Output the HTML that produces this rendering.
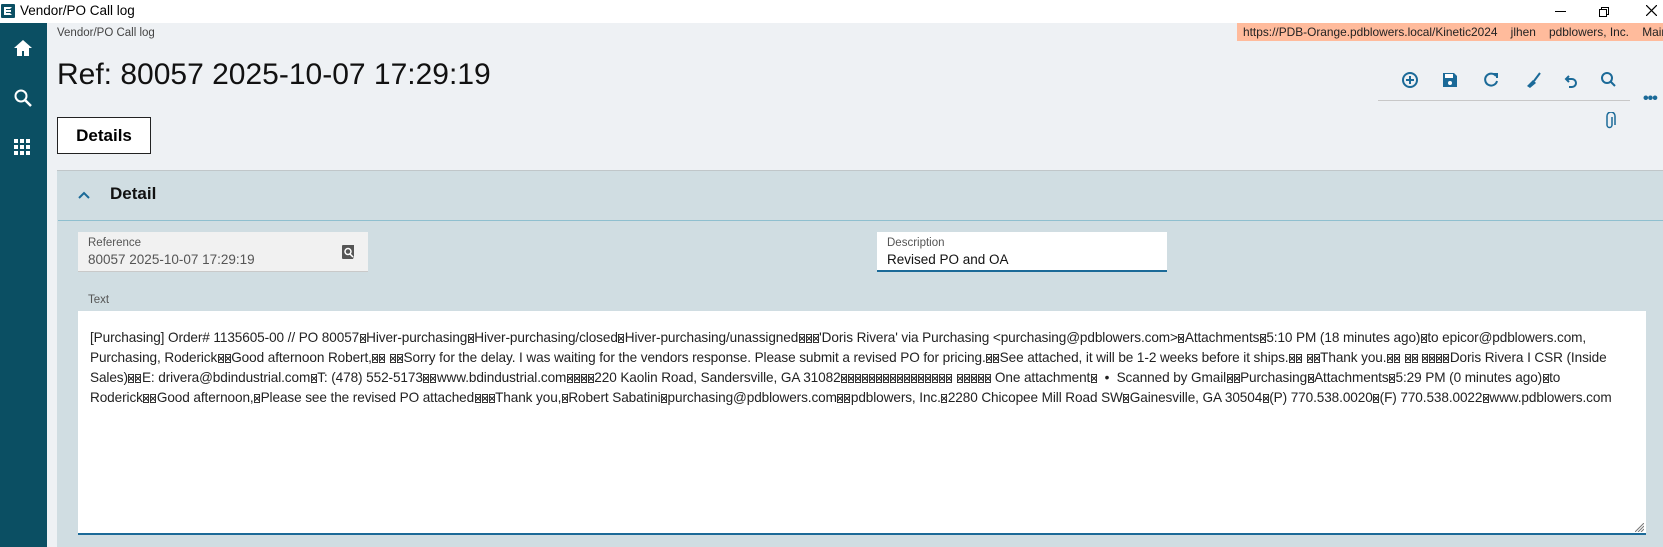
<!DOCTYPE html>
<html><head><meta charset="utf-8"><style>
*{margin:0;padding:0;box-sizing:border-box}
body{width:1663px;height:547px;overflow:hidden;background:#eef1f4;font-family:"Liberation Sans",sans-serif;position:relative;color:#000}
.abs{position:absolute}
.tb{left:0;top:0;width:1663px;height:23px;background:#fff}
.side{left:0;top:23px;width:47px;height:524px;background:#0b4f63}
.bx{display:inline-block;width:6px;height:9px;border:1px solid #333;margin:0 0.5px;vertical-align:-1px;background:linear-gradient(45deg,transparent 45%,#333 45%,#333 55%,transparent 55%),linear-gradient(-45deg,transparent 45%,#333 45%,#333 55%,transparent 55%)}
.ln{position:absolute;left:90px;white-space:nowrap;font-size:13.6px;letter-spacing:-0.1px;color:#222;line-height:20px}
</style></head><body>
<div class="abs tb"></div>
<div class="abs" style="left:1px;top:4px;width:14px;height:14px;background:#0b4f63;border-radius:1px"></div>
<div class="abs" style="left:4px;top:7px;width:8px;height:8px;border:2px solid #fff;border-right-color:transparent;"></div>
<div class="abs" style="left:5px;top:10px;width:6px;height:2px;background:#fff"></div>
<div class="abs" style="left:20px;top:3px;font-size:13.5px">Vendor/PO Call log</div>
<div class="abs" style="left:1555px;top:11px;width:11px;height:1px;background:#000"></div>
<div class="abs" style="left:1601px;top:7px;width:8px;height:8px;border:1px solid #000"></div>
<div class="abs" style="left:1599px;top:9px;width:8px;height:8px;border:1px solid #000;background:#fff"></div>
<svg class="abs" style="left:1646px;top:5px" width="11" height="11"><path d="M0 0L11 11M11 0L0 11" stroke="#000" stroke-width="1.2"/></svg>

<div class="abs side"></div>
<svg class="abs" style="left:13px;top:39px" width="20" height="18"><path d="M10 1L1 9h3v8h5v-5h2v5h5V9h3z" fill="#fff"/></svg>
<svg class="abs" style="left:13px;top:88px" width="20" height="20"><circle cx="8" cy="8" r="5.5" fill="none" stroke="#fff" stroke-width="2"/><path d="M12 12l6 6" stroke="#fff" stroke-width="2.5"/></svg>
<svg class="abs" style="left:14px;top:139px" width="18" height="18" fill="#fff"><rect x="0" y="0" width="4" height="4"/><rect x="6" y="0" width="4" height="4"/><rect x="12" y="0" width="4" height="4"/><rect x="0" y="6" width="4" height="4"/><rect x="6" y="6" width="4" height="4"/><rect x="12" y="6" width="4" height="4"/><rect x="0" y="12" width="4" height="4"/><rect x="6" y="12" width="4" height="4"/><rect x="12" y="12" width="4" height="4"/></svg>

<div class="abs" style="left:57px;top:27px;font-size:11.5px;color:#444">Vendor/PO Call log</div>
<div class="abs" style="left:1237px;top:23px;width:426px;height:18px;background:#ffbb9c;font-size:11.9px;color:#222;line-height:18px;padding-left:6px;white-space:nowrap;overflow:hidden">https://PDB-Orange.pdblowers.local/Kinetic2024 &nbsp;&nbsp; jlhen &nbsp;&nbsp; pdblowers, Inc. &nbsp;&nbsp; Main Plant</div>
<div class="abs" style="left:57px;top:58px;font-size:30px;color:#111;white-space:nowrap">Ref: 80057 2025-10-07 17:29:19</div>

<svg class="abs" style="left:1400px;top:70px" width="230" height="22" fill="none" stroke="#1b6a98" stroke-width="2">
<circle cx="10" cy="10" r="7"/><path d="M10 6v8M6 10h8"/>
<path d="M43 3h11l3 3v11H43z" fill="#1b6a98" stroke="none"/><rect x="45" y="4" width="8" height="4" fill="#fff" stroke="none"/><circle cx="50" cy="13" r="2" fill="#fff" stroke="none"/>
<path d="M96 6a6 6 0 1 0 1 5"/><path d="M93 4h4v4" />
<path d="M127 16l6-6 3 3-6 5z" fill="#1b6a98" stroke="none"/><path d="M134 11l6-8"/>
<path d="M169 6l-3 3 3 3M166 9h6a4 4 0 0 1 0 8h-3"/>
<circle cx="207" cy="8" r="5"/><path d="M211 12l4 4"/>
</svg>
<div class="abs" style="left:1378px;top:100px;width:252px;height:1px;background:#c8c8c8"></div>
<div class="abs" style="left:1643px;top:90px;font-size:16px;color:#1b6a98;font-weight:bold;letter-spacing:-1px">•••</div>
<svg class="abs" style="left:1604px;top:112px" width="12" height="18" fill="none" stroke="#1b6a98" stroke-width="1.5"><path d="M8 5v8a2.5 2.5 0 0 1-5 0V4a4 4 0 0 1 8 0v9"/></svg>

<div class="abs" style="left:57px;top:117px;width:94px;height:37px;border:1px solid #222;background:#fff;font-size:17px;font-weight:bold;text-align:center;line-height:35px">Details</div>

<div class="abs" style="left:57px;top:170px;width:1606px;height:377px;background:#d0dde2;border-top:1px solid #c0c6c9"></div>
<svg class="abs" style="left:77px;top:190px" width="14" height="10"><path d="M2 8l5-5 5 5" fill="none" stroke="#1b6a98" stroke-width="2"/></svg>
<div class="abs" style="left:110px;top:184px;font-size:17px;font-weight:bold;color:#111">Detail</div>
<div class="abs" style="left:58px;top:220px;width:1605px;height:1px;background:#8fbfcf"></div>

<div class="abs" style="left:78px;top:232px;width:290px;height:40px;background:#f1f1f1;border-bottom:1px solid #c9c9c9"></div>
<div class="abs" style="left:88px;top:237px;font-size:11.5px;color:#555">Reference</div>
<div class="abs" style="left:88px;top:252px;font-size:13.5px;color:#555">80057 2025-10-07 17:29:19</div>
<svg class="abs" style="left:342px;top:245px" width="13" height="14"><path d="M0 1a1 1 0 0 1 1-1h11v11l-1 3H1a1 1 0 0 1-1-1z" fill="#555"/><circle cx="6" cy="6.5" r="3" fill="none" stroke="#fff" stroke-width="1.5"/><path d="M8 9l3 3" stroke="#fff" stroke-width="1.5"/></svg>

<div class="abs" style="left:877px;top:232px;width:290px;height:40px;background:#fff;border-bottom:2px solid #1b6a98"></div>
<div class="abs" style="left:887px;top:237px;font-size:11.5px;color:#555">Description</div>
<div class="abs" style="left:887px;top:252px;font-size:13.5px;color:#111">Revised PO and OA</div>

<div class="abs" style="left:88px;top:294px;font-size:11.5px;color:#555">Text</div>
<div class="abs" style="left:78px;top:311px;width:1568px;height:224px;background:#fff;border-bottom:2px solid #1b6a98"></div>
<svg class="abs" style="left:1635px;top:523px" width="9" height="9" stroke="#777"><path d="M0 9L9 0M3 9L9 3M6 9L9 6"/></svg>

<div class="ln" style="top:328px">[Purchasing] Order# 1135605-00 // PO 80057<i class="bx"></i>Hiver-purchasing<i class="bx"></i>Hiver-purchasing/closed<i class="bx"></i>Hiver-purchasing/unassigned<i class="bx"></i><i class="bx"></i><i class="bx"></i>'Doris Rivera' via Purchasing &lt;purchasing@pdblowers.com&gt;<i class="bx"></i>Attachments<i class="bx"></i>5:10 PM (18 minutes ago)<i class="bx"></i>to epicor@pdblowers.com,</div>
<div class="ln" style="top:348px">Purchasing, Roderick<i class="bx"></i><i class="bx"></i>Good afternoon Robert,<i class="bx"></i><i class="bx"></i> <i class="bx"></i><i class="bx"></i>Sorry for the delay. I was waiting for the vendors response. Please submit a revised PO for pricing.<i class="bx"></i><i class="bx"></i>See attached, it will be 1-2 weeks before it ships.<i class="bx"></i><i class="bx"></i> <i class="bx"></i><i class="bx"></i>Thank you.<i class="bx"></i><i class="bx"></i> <i class="bx"></i><i class="bx"></i> <i class="bx"></i><i class="bx"></i><i class="bx"></i><i class="bx"></i>Doris Rivera I CSR (Inside</div>
<div class="ln" style="top:368px">Sales)<i class="bx"></i><i class="bx"></i>E: drivera@bdindustrial.com<i class="bx"></i>T: (478) 552-5173<i class="bx"></i><i class="bx"></i>www.bdindustrial.com<i class="bx"></i><i class="bx"></i><i class="bx"></i><i class="bx"></i>220 Kaolin Road, Sandersville, GA 31082<i class="bx"></i><i class="bx"></i><i class="bx"></i><i class="bx"></i><i class="bx"></i><i class="bx"></i><i class="bx"></i><i class="bx"></i><i class="bx"></i><i class="bx"></i><i class="bx"></i><i class="bx"></i><i class="bx"></i><i class="bx"></i><i class="bx"></i><i class="bx"></i> <i class="bx"></i><i class="bx"></i><i class="bx"></i><i class="bx"></i><i class="bx"></i> One attachment<i class="bx"></i> &nbsp;• &nbsp;Scanned by Gmail<i class="bx"></i><i class="bx"></i>Purchasing<i class="bx"></i>Attachments<i class="bx"></i>5:29 PM (0 minutes ago)<i class="bx"></i>to</div>
<div class="ln" style="top:388px">Roderick<i class="bx"></i><i class="bx"></i>Good afternoon,<i class="bx"></i>Please see the revised PO attached<i class="bx"></i><i class="bx"></i><i class="bx"></i>Thank you,<i class="bx"></i>Robert Sabatini<i class="bx"></i>purchasing@pdblowers.com<i class="bx"></i><i class="bx"></i>pdblowers, Inc.<i class="bx"></i>2280 Chicopee Mill Road SW<i class="bx"></i>Gainesville, GA 30504<i class="bx"></i>(P) 770.538.0020<i class="bx"></i>(F) 770.538.0022<i class="bx"></i>www.pdblowers.com</div>
</body></html>
